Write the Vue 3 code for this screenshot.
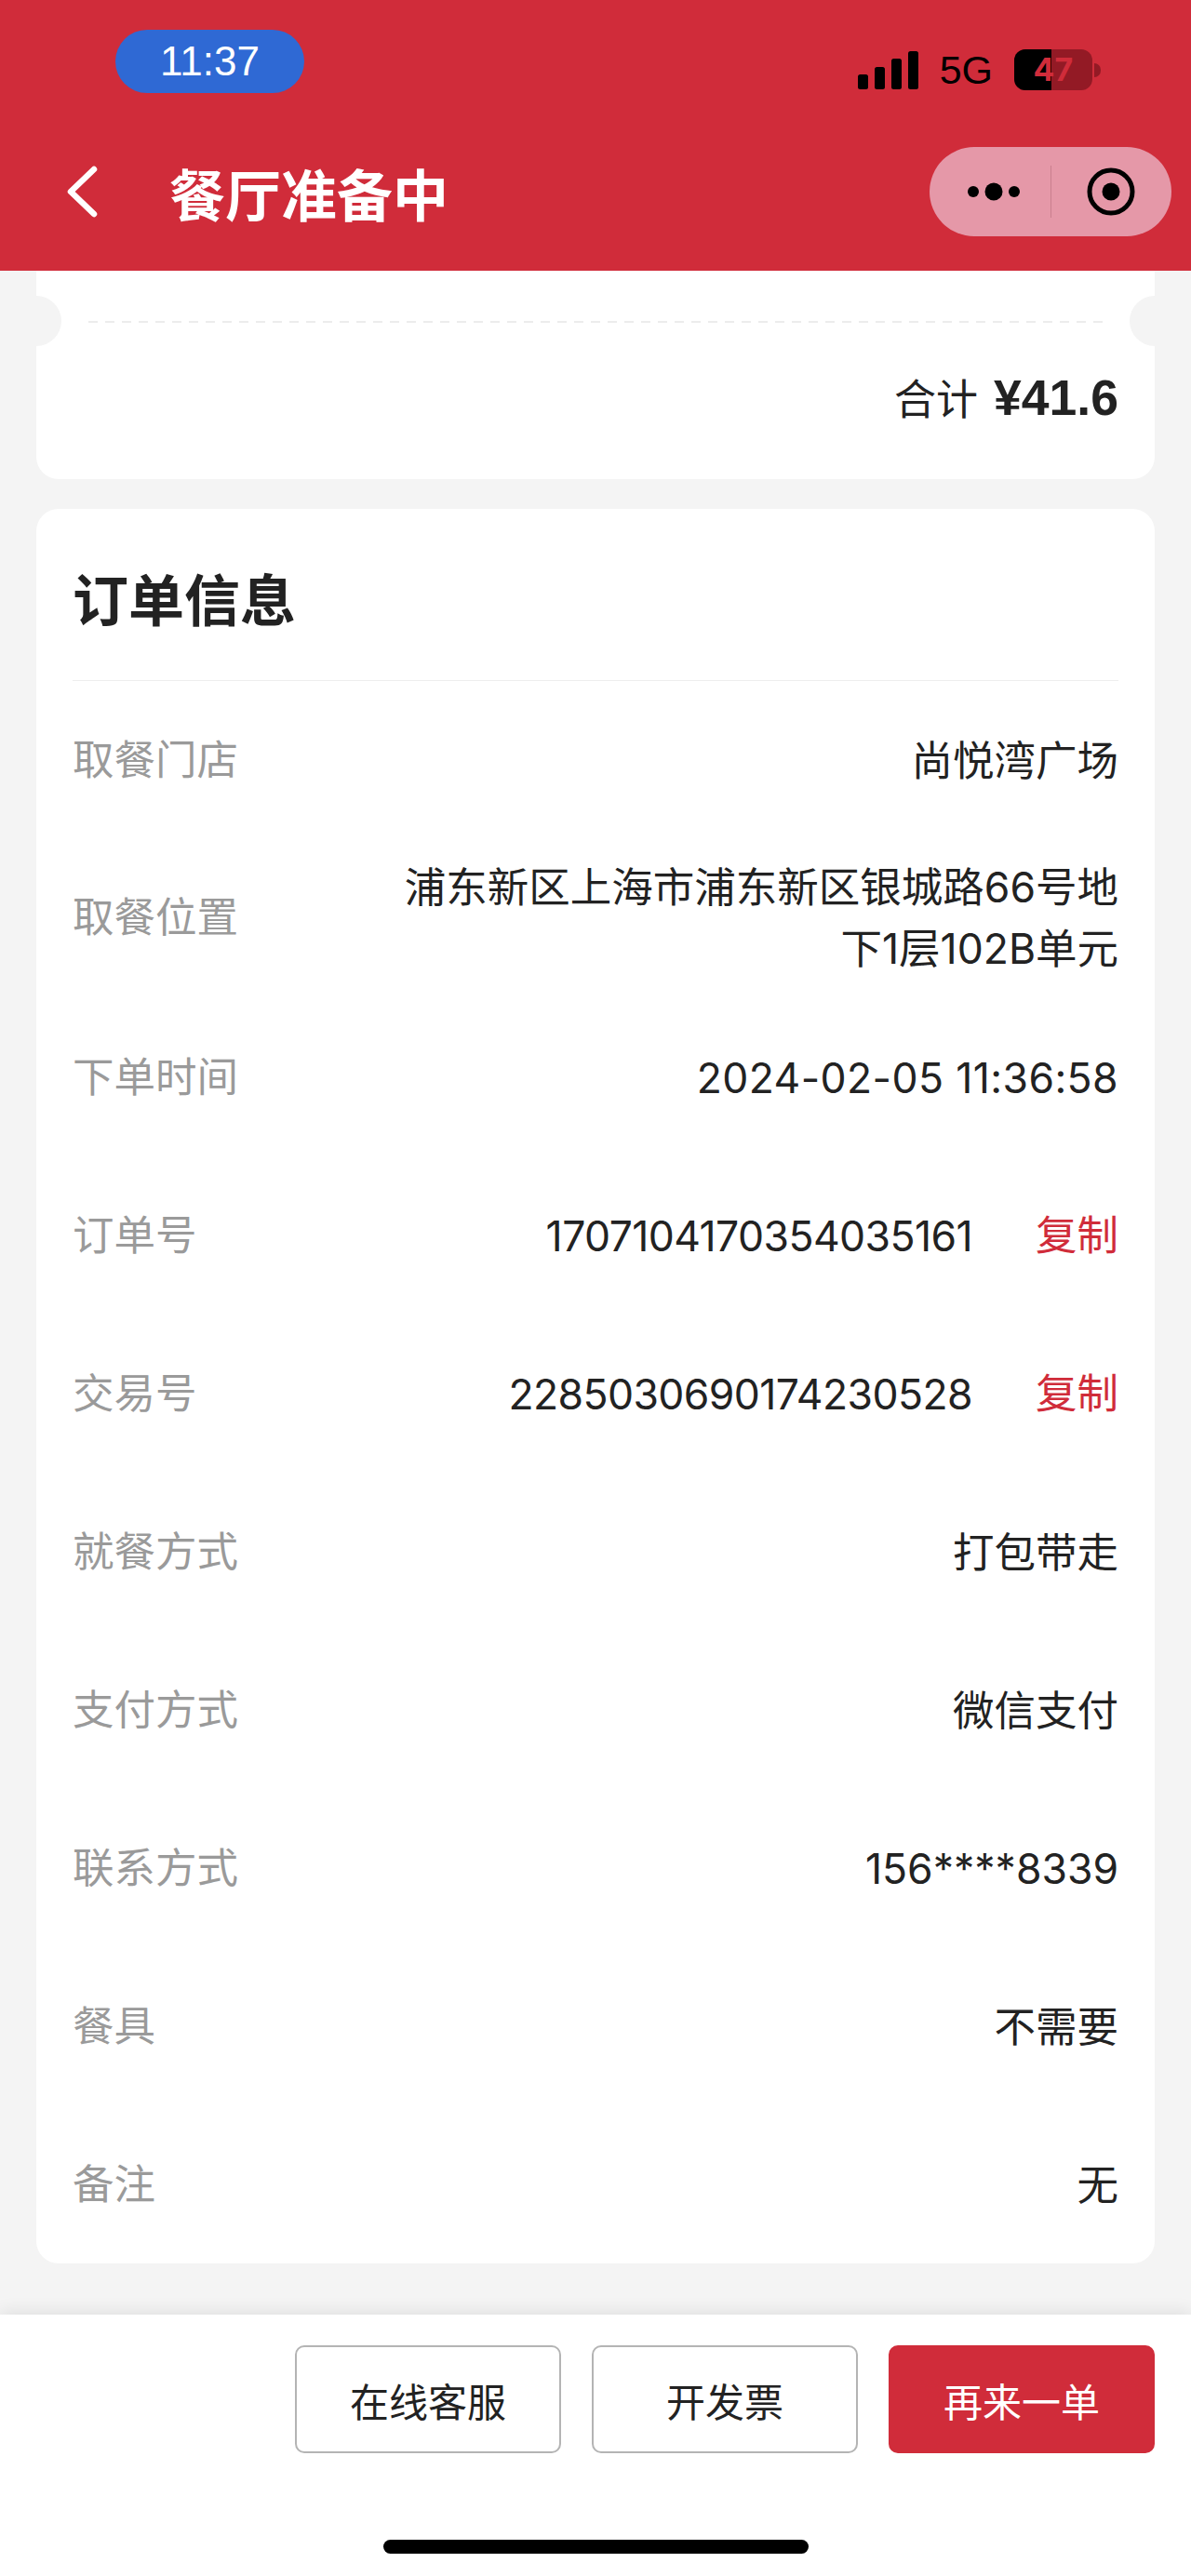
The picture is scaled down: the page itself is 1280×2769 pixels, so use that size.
<template>
  <div class="page">
    <!-- 顶部导航 -->
    <header class="nav">
      <div class="status-bar">
        <span class="time">11:37</span>
        <div class="status-right">
          <svg class="signal" width="65" height="41" viewBox="0 0 65 41">
            <rect x="0" y="25" width="11" height="16" rx="2.5" />
            <rect x="18" y="17" width="11" height="24" rx="2.5" />
            <rect x="36" y="8" width="11" height="33" rx="2.5" />
            <rect x="54" y="0" width="11" height="41" rx="2.5" />
          </svg>
          <span class="net">5G</span>
          <div class="battery">
            <div class="battery-fill"></div>
            <span class="battery-num">47</span>
            <i class="battery-cap"></i>
          </div>
        </div>
      </div>
      <div class="title-bar">
        <svg class="back" width="36" height="56" viewBox="0 0 36 56">
          <path d="M31 4 L6 28 L31 52" fill="none" stroke="#fff" stroke-width="6.5" stroke-linecap="round" stroke-linejoin="round" />
        </svg>
        <h1 class="title">餐厅准备中</h1>
        <div class="capsule">
          <div class="capsule-side">
            <svg class="dots" width="56" height="20" viewBox="0 0 56 20">
              <circle cx="6" cy="10" r="6" />
              <circle cx="28" cy="10" r="9.5" />
              <circle cx="50" cy="10" r="6" />
            </svg>
          </div>
          <i class="capsule-line"></i>
          <div class="capsule-side">
            <svg width="52" height="52" viewBox="0 0 52 52">
              <circle cx="26" cy="26" r="23" fill="none" stroke="#000" stroke-width="5" />
              <circle cx="26" cy="26" r="9.5" />
            </svg>
          </div>
        </div>
      </div>
    </header>

    <main class="content">
      <!-- 合计卡片（上半部分被导航遮住） -->
      <section class="card total-card">
        <i class="notch notch-left"></i>
        <i class="notch notch-right"></i>
        <div class="dash"></div>
        <div class="total">
          <span class="total-label">合计</span>
          <span class="total-price">¥41.6</span>
        </div>
      </section>

      <!-- 订单信息 -->
      <section class="card info-card">
        <h2 class="info-title">订单信息</h2>
        <div class="rows">
          <div class="row" v-for="item in rows" :key="item.label">
            <span class="row-label">{{ item.label }}</span>
            <span :class="['row-value', item.type]">{{ item.value }}</span>
            <span class="row-copy" v-if="item.type === 'code'">复制</span>
          </div>
        </div>
      </section>
    </main>

    <!-- 底部按钮 -->
    <footer class="bottom">
      <div class="actions">
        <button class="btn">在线客服</button>
        <button class="btn">开发票</button>
        <button class="btn primary">再来一单</button>
      </div>
      <i class="home-bar"></i>
    </footer>
  </div>
</template>

<script setup>
const rows = [
  { label: '取餐门店', value: '尚悦湾广场' },
  { label: '取餐位置', value: '浦东新区上海市浦东新区银城路66号地下1层102B单元' },
  { label: '下单时间', value: '2024-02-05 11:36:58', type: 'date' },
  { label: '订单号', value: '1707104170354035161', type: 'code' },
  { label: '交易号', value: '2285030690174230528', type: 'code' },
  { label: '就餐方式', value: '打包带走' },
  { label: '支付方式', value: '微信支付' },
  { label: '联系方式', value: '156****8339' },
  { label: '餐具', value: '不需要' },
  { label: '备注', value: '无' }
]
</script>

<style>
html,
body {
  margin: 0;
  background: #f4f4f4;
}
</style>

<style scoped>
.page {
  width: 1280px;
  height: 2769px;
  display: flex;
  flex-direction: column;
  overflow: hidden;
  background: #f4f4f4;
  font-family: "Liberation Sans", "Noto Sans CJK SC", sans-serif;
  color: #222;
}

/* 导航 */
.nav {
  height: 291px;
  flex-shrink: 0;
  background: #d02c3a;
}

.status-bar {
  height: 68px;
  display: flex;
  justify-content: space-between;
  align-items: flex-start;
  padding: 32px 106px 0 124px;
}

.time {
  width: 203px;
  height: 68px;
  line-height: 68px;
  text-align: center;
  border-radius: 34px;
  background: #2f69d4;
  color: #fff;
  font-size: 44px;
}

.status-right {
  display: flex;
  align-items: center;
  margin-top: 21px;
}

.signal {
  fill: #000;
}

.net {
  margin-left: 23px;
  font-size: 43px;
  line-height: 44px;
  color: #000;
}

.battery {
  position: relative;
  width: 84px;
  height: 44px;
  margin-left: 23px;
  border-radius: 12px;
  background: #931a25;
}

.battery-fill {
  width: 40px;
  height: 44px;
  border-radius: 12px 0 0 12px;
  background: #000;
}

.battery-num {
  position: absolute;
  left: 0;
  top: 0;
  width: 100%;
  text-align: center;
  line-height: 44px;
  font-family: Inter, sans-serif;
  font-size: 34px;
  font-weight: 700;
  color: #d02c3a;
}

.battery-cap {
  position: absolute;
  right: -9px;
  top: 15px;
  width: 7px;
  height: 15px;
  border-radius: 0 8px 8px 0;
  background: #931a25;
}

.title-bar {
  height: 96px;
  margin-top: 58px;
  display: flex;
  align-items: center;
  padding: 0 21px 0 70px;
}

.title {
  margin: 0 0 0 76px;
  font-size: 60px;
  font-weight: 600;
  color: #fff;
}

.capsule {
  margin-left: auto;
  width: 260px;
  height: 96px;
  display: flex;
  align-items: center;
  border-radius: 48px;
  background: #e598a8;
}

.capsule-side {
  flex: 1;
  display: flex;
  justify-content: center;
  align-items: center;
}

.dots {
  margin-left: 8px;
}

.capsule-line {
  width: 1px;
  height: 56px;
  background: #c97f8e;
}

/* 内容 */
.content {
  flex: 1;
  display: flex;
  flex-direction: column;
  gap: 32px;
  padding: 0 39px;
}

.card {
  background: #fff;
  border-radius: 24px;
}

.total-card {
  position: relative;
  height: 224px;
  border-radius: 0 0 24px 24px;
}

.notch {
  position: absolute;
  top: 27px;
  width: 27px;
  height: 54px;
  background: #f4f4f4;
}

.notch-left {
  left: 0;
  border-radius: 0 27px 27px 0;
}

.notch-right {
  right: 0;
  border-radius: 27px 0 0 27px;
}

.dash {
  position: absolute;
  left: 56px;
  right: 56px;
  top: 54px;
  height: 2px;
  background: repeating-linear-gradient(to right, #ececec 0, #ececec 10px, transparent 10px, transparent 18px);
}

.total {
  position: absolute;
  right: 39px;
  top: 103px;
  display: flex;
  align-items: baseline;
  gap: 17px;
}

.total-label {
  font-size: 45px;
}

.total-price {
  font-size: 53.5px;
  font-weight: 700;
}

.info-card {
  padding: 0 39px;
  height: 1886px;
}

.info-title {
  margin: 0;
  height: 184px;
  line-height: 202px;
  font-size: 60px;
  font-weight: 700;
  border-bottom: 1px solid #eeeeee;
}

.rows {
  padding-top: 3px;
}

.row {
  height: 170px;
  display: flex;
  align-items: center;
  font-size: 44.5px;
  line-height: 66px;
}

.row:first-child {
  height: 165px;
}

.row:nth-child(2) {
  height: 174px;
}

.row-label {
  flex-shrink: 0;
  width: 320px;
  color: #9a9a9a;
}

.row-value {
  flex: 1;
  text-align: right;
  font-family: Inter, "Noto Sans CJK SC", sans-serif;
}

.row-value.code {
  letter-spacing: -0.58px;
}

.row-value.date {
  letter-spacing: 0.4px;
}

.row-copy {
  margin-left: 68px;
  color: #d02c3a;
}

/* 底部 */
.bottom {
  position: relative;
  height: 281px;
  flex-shrink: 0;
  background: #fff;
  box-shadow: 0 -4px 16px rgba(0, 0, 0, 0.08);
}

.actions {
  display: flex;
  justify-content: flex-end;
  gap: 33px;
  padding: 33px 39px 0;
}

.btn {
  width: 286px;
  height: 116px;
  box-sizing: border-box;
  border: 2px solid #b4b4b4;
  border-radius: 10px;
  background: #fff;
  color: #222;
  font-family: inherit;
  font-size: 42px;
}

.btn.primary {
  border-color: #d02c3a;
  background: #d02c3a;
  color: #fff;
}

.home-bar {
  position: absolute;
  left: 412px;
  bottom: 24px;
  width: 457px;
  height: 15px;
  border-radius: 8px;
  background: #000;
}
</style>
